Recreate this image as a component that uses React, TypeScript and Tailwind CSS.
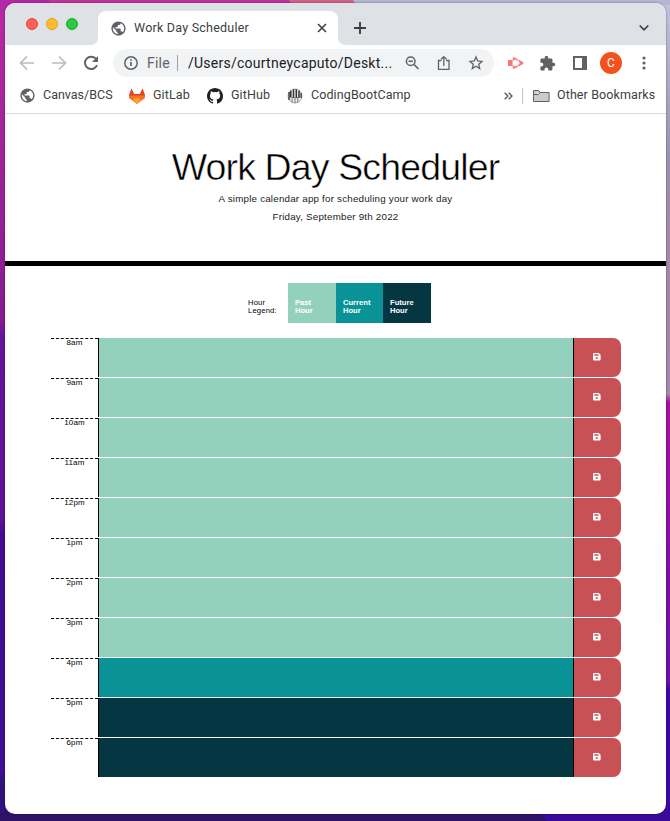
import type { ReactNode } from "react";
import { MdExtension, MdPublic } from "react-icons/md";

const rows = [
  { time: "8am", tone: "bg-[#94d1bd]" },
  { time: "9am", tone: "bg-[#94d1bd]" },
  { time: "10am", tone: "bg-[#94d1bd]" },
  { time: "11am", tone: "bg-[#94d1bd]" },
  { time: "12pm", tone: "bg-[#94d1bd]" },
  { time: "1pm", tone: "bg-[#94d1bd]" },
  { time: "2pm", tone: "bg-[#94d1bd]" },
  { time: "3pm", tone: "bg-[#94d1bd]" },
  { time: "4pm", tone: "bg-[#0a9396]" },
  { time: "5pm", tone: "bg-[#053742]" },
  { time: "6pm", tone: "bg-[#053742]" },
];

function Wallpaper() {
  return (
    <svg className="absolute inset-0 -z-10" width="670" height="821" viewBox="0 0 670 821">
      <defs>
        <linearGradient id="left" x1="0" y1="0" x2="0" y2="1">
          <stop offset="0" stopColor="#b92aa5" />
          <stop offset=".39" stopColor="#851c91" />
          <stop offset=".41" stopColor="#65149c" />
          <stop offset=".63" stopColor="#621297" />
          <stop offset=".65" stopColor="#430c92" />
          <stop offset=".94" stopColor="#430e91" />
          <stop offset=".95" stopColor="#30137b" />
          <stop offset="1" stopColor="#30137b" />
        </linearGradient>
        <linearGradient id="right" x1="0" y1="0" x2="0" y2="1">
          <stop offset="0" stopColor="#c3c2df" />
          <stop offset=".2" stopColor="#9a91b2" />
          <stop offset=".3" stopColor="#a987ad" />
          <stop offset=".48" stopColor="#a485ae" />
          <stop offset=".49" stopColor="#a3149a" />
          <stop offset=".7" stopColor="#7d12a2" />
          <stop offset=".83" stopColor="#720ea4" />
          <stop offset=".84" stopColor="#4007a2" />
          <stop offset="1" stopColor="#3d08a0" />
        </linearGradient>
      </defs>
      <rect width="335" height="821" fill="url(#left)" />
      <rect x="335" width="335" height="821" fill="url(#right)" />
      <path d="M0 0h292v10H0z" fill="#c2349a" />
      <path d="M0 0h48l8 10H0z" fill="#b328a6" />
      <path d="M289 0h64l8 10h-66z" fill="#cf6488" />
      <path d="M353 0h317v5H356z" fill="#b5b5d4" />
      <path d="M0 812h536l12 9H0z" fill="#2d1268" />
      <path d="M536 812h134v9H548z" fill="#3b0a98" />
    </svg>
  );
}

function Globe() {
  return (
    <span className="flex size-4 shrink-0 items-center justify-center text-[#5f6368]">
      <MdPublic className="size-[17px] shrink-0" />
    </span>
  );
}

function Tip({ d, w = 1.7, c = "#5f6368" }: { d: string; w?: number; c?: string }) {
  return (
    <svg width="18" height="18" viewBox="0 0 18 18" fill="none" stroke={c} strokeWidth={w} className="shrink-0">
      <path d={d} />
    </svg>
  );
}

function Save() {
  return (
    <svg width="8" height="8" viewBox="0 0 8 8">
      <path fillRule="evenodd" fill="#fff" d="M.9 0h4.9L7.600 1.800v5q0 .8-.8.8H.9Q.1 7.600.1 6.800V.8Q.1 0 .9 0ZM1.300 1.200v1.500h4.300V1.200ZM3.850 3.900a1.100 1.100 0 1 0 0 2.200 1.100 1.100 0 0 0 0-2.200Z" />
    </svg>
  );
}

function Legend({ children, tone }: { children: ReactNode; tone: string }) {
  return <div className={"h-10 pt-4 pl-[7px] font-bold text-white " + tone}>{children}</div>;
}

export default function App() {
  return (
    <div className="relative isolate h-[821px] w-[670px] overflow-hidden pt-[3px] pl-[5px] font-['Roboto','Liberation_Sans',sans-serif]">
      <Wallpaper />
      <div className="h-[811px] w-[661px] overflow-hidden rounded-[10px] bg-white shadow-[0_0_2px_rgba(0,0,0,.5)]">
        <div className="flex h-[42px] bg-[#dee1e6]">
          <div className="flex w-[93px] gap-2 rounded-br-[8px] pt-[15px] pl-[21px]">
            <span className="size-3 rounded-full border border-[#e0443e] bg-[#ff5f57]" />
            <span className="size-3 rounded-full border border-[#dea123] bg-[#febc2e]" />
            <span className="size-3 rounded-full border border-[#1aab29] bg-[#28c840]" />
          </div>
          <div className="relative mt-2 flex h-[34px] w-[240px] items-center rounded-t-[8px] bg-white pl-3">
            <svg className="absolute bottom-0 -left-2" width="8" height="8"><path d="M8 0v8H0Q8 8 8 0" fill="#fff" /></svg>
            <svg className="absolute -right-2 bottom-0" width="8" height="8"><path d="M0 0v8h8Q0 8 0 0" fill="#fff" /></svg>
            <Globe />
            <span className="ml-2 w-[183px] text-[12.5px] tracking-[.23px] whitespace-nowrap text-[#3c4043]">Work Day Scheduler</span>
            <svg width="10" height="10" viewBox="0 0 10 10" stroke="#3c4043" strokeWidth="1.6"><path d="m1 1 8 8M9 1 1 9" /></svg>
          </div>
          <svg className="mt-[19px] ml-4" width="12" height="12" stroke="#3c4043" strokeWidth="1.9"><path d="M6 0v12M0 6h12" /></svg>
          <svg className="mt-[21px] ml-[273px]" width="10" height="8" fill="none" stroke="#3c4043" strokeWidth="1.7"><path d="m.7 1.5 4.3 4.3 4.3-4.3" /></svg>
        </div>
        <div className="flex h-9 items-center pl-[13px]">
          <Tip c="#babcbe" d="M16 9H3M9 2.5 2.5 9 9 15.5" />
          <span className="w-[14px]" />
          <Tip c="#babcbe" d="M2 9h13M9 2.5 15.5 9 9 15.5" />
          <svg className="ml-[14px]" width="18" height="18" viewBox="0 0 18 18" fill="none" stroke="#5f6368" strokeWidth="2"><path d="M14.2 5.2A6.2 6.2 0 1 0 15 11" /><path d="M16 2v6h-6z" fill="#5f6368" stroke="none" /></svg>
          <div className="ml-[13px] flex h-7 w-[381px] items-center rounded-full bg-[#f1f3f4] pl-[10px]">
            <svg width="16" height="16" viewBox="0 0 16 16" fill="none" stroke="#5f6368" strokeWidth="1.5"><circle cx="8" cy="8" r="6.2" /><path d="M8 7v4M8 4.3v1.5" strokeWidth="1.7" /></svg>
            <span className="ml-2 w-[30px] text-sm tracking-[.2px] text-[#5f6368]">File</span>
            <span className="h-4 w-px bg-[#9aa0a6]" />
            <span className="ml-[10px] w-[215px] text-sm tracking-[.25px] whitespace-nowrap text-[#202124]">/Users/courtneycaputo/Deskt...</span>
            <Tip w={1.5} d="M12 7.2a4.3 4.3 0 1 1-8.600 0 4.300 4.300 0 0 1 8.600 0M10.900 10.400l4.600 4.600M5.500 7.200h4.400" />
            <span className="w-[14px]" />
            <Tip w={1.3} d="M6.500 6.500h-3v8.800h10.500V6.500h-3M8.800 12V3M6.100 5.300 8.800 2.600l2.700 2.700" />
            <span className="w-[14px]" />
            <Tip w={1.3} d="m9 3 1.700 4 4.300.4-3.300 2.800 1 4.300L9 12.200l-3.700 2.300 1-4.300L3 7.400 7.300 7z" />
          </div>
          <svg className="ml-[14px]" width="16" height="14" viewBox="0 0 16 14"><path d="M0 4h4.600v6H0z" fill="#f9777a" /><path d="M5.500 1.500V4.500M5.500 12.500V9.500M5.500 1.700 15 7l-9.500 5.300" stroke="#f9777a" strokeWidth="1.600" fill="none" strokeDasharray="5 .7" /><path d="m11.500 4.500 4.500 2.500-4.500 2.500z" fill="#f9777a" /></svg>
          <MdExtension className="ml-[15px] size-[17px] text-[#5f6368]" />
          <svg className="ml-[17px]" width="14" height="14"><path fillRule="evenodd" d="M0 0h14v14H0zM2 2v10h7V2z" fill="#5f6368" /></svg>
          <span className="ml-[13px] flex size-[22px] items-center justify-center rounded-full bg-[#f4511e] text-xs text-white">C</span>
          <svg className="ml-5" width="4" height="14" fill="#5f6368"><circle cx="2" cy="2" r="1.6" /><circle cx="2" cy="7" r="1.6" /><circle cx="2" cy="12" r="1.6" /></svg>
        </div>
        <div className="flex h-[33px] items-center border-b border-[#dadce0] pb-[3px] pl-[14px] text-[12.5px] whitespace-nowrap text-[#3c4043]">
          <Globe />
          <span className="ml-2 w-[85px]">Canvas/BCS</span>
          <svg width="18" height="18" viewBox="0 0 18 18"><path d="M3.5 1.500 1 8.500v2.500L9 17l8-6V8.500l-2.500-7L12 7H6z" fill="#fc6d26" /><path d="M3.500 1.500 6 7h6l2.500-5.500L17 8.500H1z" fill="#e24329" /><path d="m5 13 4-3 4 3-4 4z" fill="#fca326" /></svg>
          <span className="ml-[7px] w-[54px] tracking-[.1px]">GitLab</span>
          <svg width="16" height="16" viewBox="0 0 16 16" fill="#202124"><path d="M8 0C3.580 0 0 3.580 0 8c0 3.540 2.290 6.530 5.470 7.590.4.070.55-.17.55-.38v-1.340c-2.230.48-2.690-1.070-2.690-1.070-.36-.92-.89-1.170-.89-1.170-.73-.5.060-.49.060-.49.8.060 1.230.82 1.230.82.71 1.220 1.870.87 2.330.66.070-.52.28-.87.5-1.070-1.770-.2-3.640-.89-3.640-3.950 0-.87.31-1.590.82-2.150-.08-.2-.36-1.020.08-2.120 0 0 .67-.22 2.200.82a7.600 7.600 0 0 1 4 0c1.530-1.040 2.200-.82 2.200-.82.44 1.100.16 1.920.08 2.120.51.56.82 1.270.82 2.150 0 3.070-1.870 3.750-3.650 3.950.29.25.54.73.54 1.480v2.200c0 .21.15.46.55.38A8.010 8.010 0 0 0 16 8c0-4.420-3.580-8-8-8" /></svg>
          <span className="ml-2 w-14 tracking-[.1px]">GitHub</span>
          <svg width="16" height="16" viewBox="0 0 16 16"><circle cx="8" cy="8" r="7.2" fill="#eee" /><path d="M2 4v8M3.800 2.500v7M6.500 1v9M9.300 1v9M12 2.500V10M14.200 5v5" stroke="#333" strokeWidth="1.500" /><path d="M5.100 9v5.500M8 9v6M10.700 9v5.500" stroke="#777" /><circle cx="8" cy="8" r="7" fill="none" stroke="#777" strokeWidth=".6" /></svg>
          <span className="ml-2 w-[193px] tracking-[.1px]">CodingBootCamp</span>
          <svg width="9" height="8" fill="none" stroke="#5f6368" strokeWidth="1.5"><path d="m.7.7 3.200 3.300L.7 7.300M4.700.7 7.900 4 4.700 7.300" /></svg>
          <span className="ml-[9px] h-4 w-px bg-[#c4c7ca]" />
          <svg className="ml-[10px]" width="17" height="14" fill="#ccc" stroke="#5f6368"><path d="M.5 12.500V1.500h5.200l1.400 2h9v9zM.5 5.500h4.800l1.800-2" /></svg>
          <span className="ml-[7px] tracking-[.1px]">Other Bookmarks</span>
        </div>
        <main className="font-['Liberation_Sans',Arial,sans-serif] text-black">
          <header className="h-[152px] border-b-[5px] border-black pt-[29px] text-center text-[9.8px] leading-[18px] tracking-[.2px] text-[#222]">
            <h1 className="-mb-px text-[37.5px] leading-[48px] tracking-[-.87px] whitespace-nowrap text-black [-webkit-text-stroke:.5px_white]">Work Day Scheduler</h1>
            <p>A simple calendar app for scheduling your work day</p>
            <p>Friday, September 9th 2022</p>
          </header>
          <div className="mt-[17px] ml-[243px] grid w-[183px] grid-cols-[40px_48px_47px_48px] text-[7.6px] leading-[8px]">
            <div className="pt-4 tracking-[.2px]">Hour<br />Legend:</div>
            <Legend tone="bg-[#94d1bd]">Past<br />Hour</Legend>
            <Legend tone="bg-[#0a9396]">Current<br />Hour</Legend>
            <Legend tone="bg-[#053742]">Future<br />Hour</Legend>
          </div>
          <div className="mt-[15px] ml-[46px] grid w-[570px] gap-px">
            {rows.map((row) => (
              <div key={row.time} className="grid h-[39px] grid-cols-[47px_476px_47px]">
                <div className="border-t border-dashed border-black text-center text-[8px] leading-[8px] tracking-[.1px]">{row.time}</div>
                <div className={"border-x border-black " + row.tone} />
                <button className="flex items-center justify-center rounded-l-[1px] rounded-r-[8px] bg-[#c75155] pr-[2px] pb-px"><Save /></button>
              </div>
            ))}
          </div>
        </main>
      </div>
    </div>
  );
}
